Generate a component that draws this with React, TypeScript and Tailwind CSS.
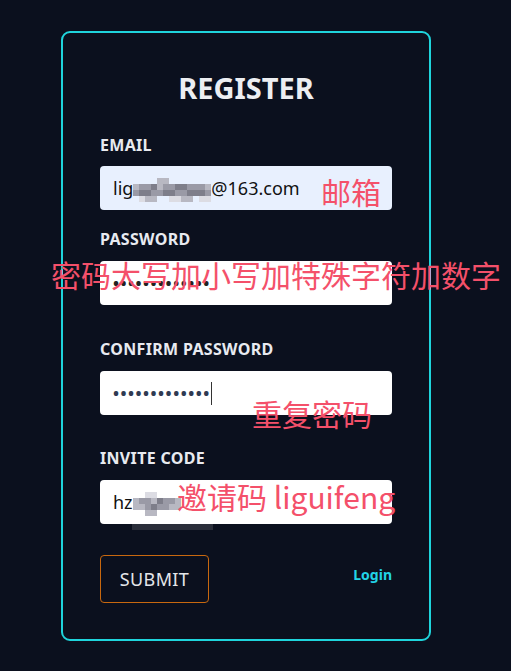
import React from "react";

const labelCls = "block text-[16px] leading-5 font-bold tracking-[0.02em] text-[#e8eaf0]";
const boxCls = "mt-3 h-11 w-full rounded-[4px] flex items-center pl-[13px] pr-[15px] text-[18px] text-[#111]";

const shades = ["bg-transparent", "bg-[#dcdce3]", "bg-[#b8b8c2]", "bg-[#9a9aa6]", "bg-[#7e7e8a]"];

// pixelated blur over the private part of the text
function Mosaic({ rows }: { rows: string[] }) {
    return (
        <span className="inline-flex flex-col mt-[4px]">
            {rows.map((r, i) => (
                <span key={i} className="flex">
                    {r.split("").map((c, j) => (
                        <span key={j} className={`h-[6px] w-[6px] ${shades[Number(c)]}`} />
                    ))}
                </span>
            ))}
        </span>
    );
}

export default function App() {
    return (
        <div
            className="relative min-h-[671px] w-[511px] bg-[#0b101e] pt-[31px] pl-[61px]"
            style={{ fontFamily: '"Noto Sans", "Open Sans", "Noto Sans CJK SC", sans-serif' }}
        >
            <div className="w-[370px] h-[610px] rounded-[9px] border-2 border-[#1fd4dc] px-[37px] pt-[37px]">
                <h1 className="text-center text-[29px] leading-9 font-bold text-[#eceef2]">REGISTER</h1>

                {/* email */}
                <div className="mt-[29px]">
                    <label className={labelCls}>EMAIL</label>
                    <div className={`${boxCls} bg-[#e8f0fe]`} style={{ marginTop: 11 }}>
                        <span>lig</span>
                        <Mosaic rows={["0000220000000", "2334233443332", "3443344334443", "0122001122011"]} />
                        <span>@163.com</span>
                    </div>
                </div>

                {/* password */}
                <div className="mt-[19px]">
                    <label className={labelCls}>PASSWORD</label>
                    <div className={`${boxCls} bg-white`}>
                        <span className="text-[16px] font-bold tracking-[1.5px] text-[#222]">•••••••••••••</span>
                    </div>
                </div>

                {/* confirm */}
                <div className="mt-[34px]">
                    <label className={labelCls}>CONFIRM PASSWORD</label>
                    <div className={`${boxCls} bg-white`}>
                        <span className="text-[16px] font-bold tracking-[1.5px] text-[#2f3a52]">•••••••••••••</span>
                        <span className="h-[23px] w-px bg-[#333]"></span>
                    </div>
                </div>

                {/* invite */}
                <div className="mt-[33px] relative">
                    <label className={labelCls}>INVITE CODE</label>
                    <div className={`${boxCls} bg-white`}>
                        <span>hz</span>
                        <Mosaic rows={["00110000", "23324332", "22343322", "00220000"]} />
                    </div>
                    <div className="absolute left-[32px] top-[76px] h-[6px] w-[81px] bg-[#2a2e3a]"></div>
                </div>

                <div className="mt-[31px] flex items-center justify-between">
                    <button className="h-12 w-[109px] rounded-[4px] border border-[#c8680f] text-[18px] text-[#e4e6ea] tracking-[0.02em]">
                        SUBMIT
                    </button>
                    <a className="text-[14px] font-bold text-[#22d3e6] mb-[10px]">Login</a>
                </div>
            </div>

            {/* red annotations */}
            <div
                className="pointer-events-none absolute inset-0 text-[30px] leading-none text-[#f4506a]"
                style={{ fontFamily: '"Noto Sans CJK SC", sans-serif' }}
            >
                <span className="absolute left-[321px] top-[176px]">邮箱</span>
                <span className="absolute left-[51px] top-[259px] whitespace-nowrap">密码大写加小写加特殊字符加数字</span>
                <span className="absolute left-[252px] top-[398px]">重复密码</span>
                <span className="absolute left-[177px] top-[481px] whitespace-nowrap">邀请码 liguifeng</span>
            </div>
        </div>
    );
}
